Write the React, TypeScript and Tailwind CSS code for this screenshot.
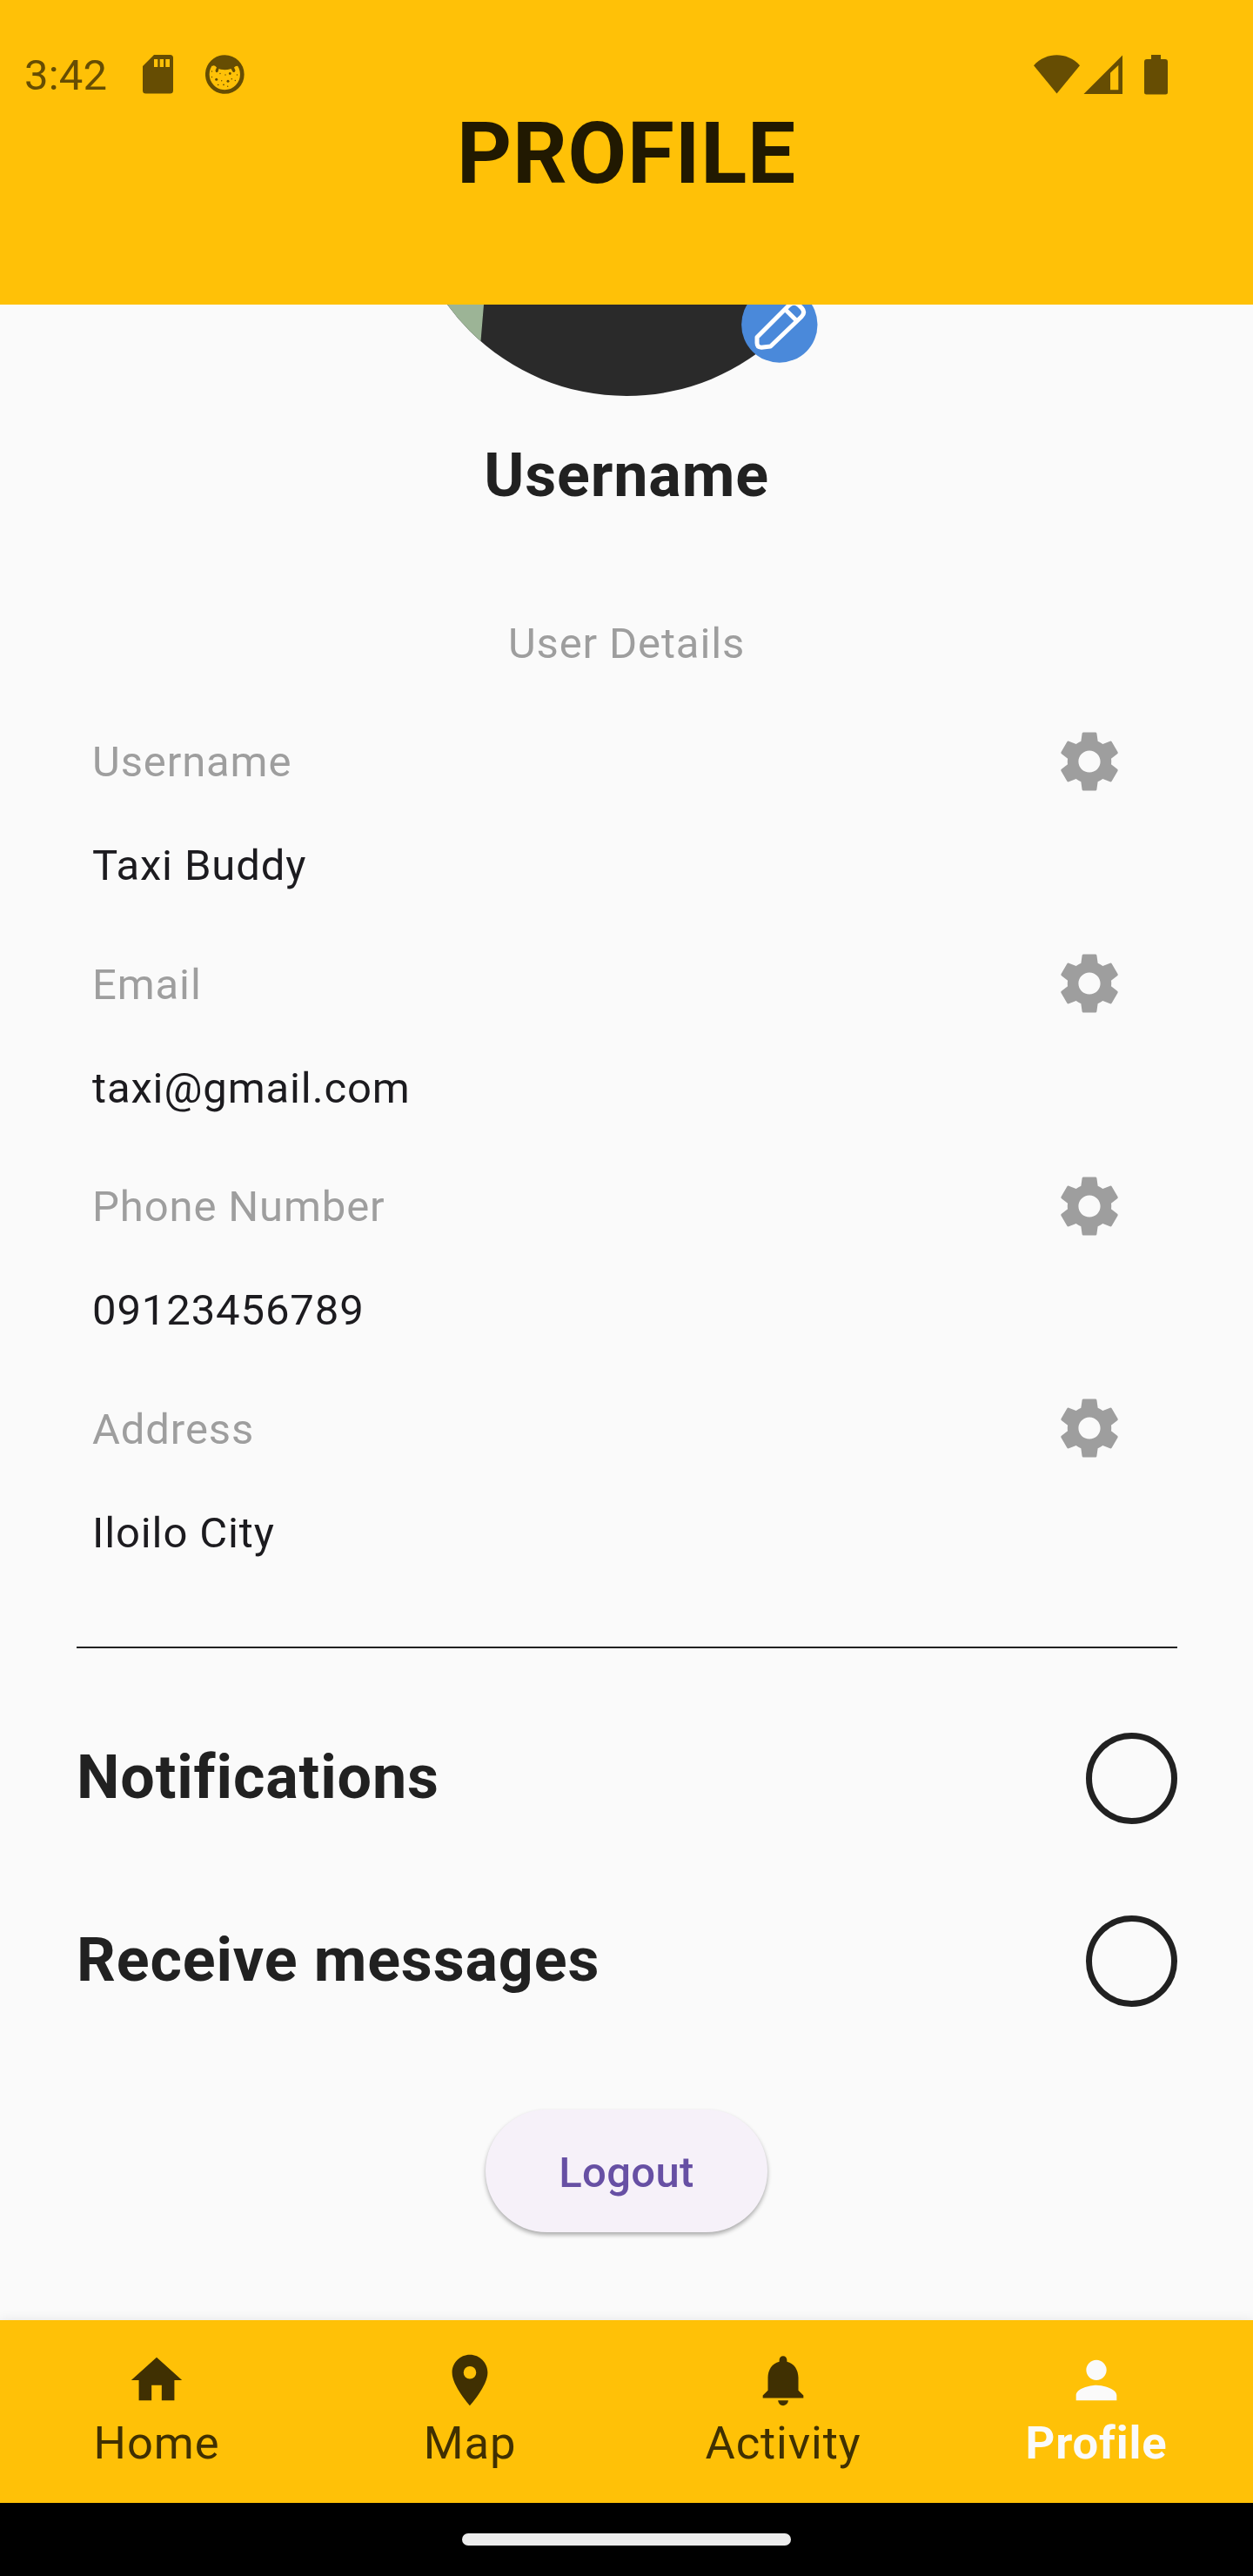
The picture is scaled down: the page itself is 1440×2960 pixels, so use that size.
import type { ReactNode } from "react";
import { MdHome, MdLocationOn, MdNotifications, MdPerson, MdSettings } from "react-icons/md";

const details = [
  { label: "Username", value: "Taxi Buddy" },
  { label: "Email", value: "taxi@gmail.com" },
  { label: "Phone Number", value: "09123456789" },
  { label: "Address", value: "Iloilo City" },
];

function StatusBar() {
  return (
    <div className="flex h-12 items-center text-[#664d03]">
      <span className="ml-[28px] w-[136px] text-[49px] leading-[48px] tracking-[0.2px]">3:42</span>
      <svg className="-mt-[3px] h-[45px] w-[35px]" viewBox="0 0 35 45" fill="currentColor">
        <path
          fillRule="evenodd"
          d="M13 0h18.500q3.500 0 3.500 3.500v37.500q0 3.500-3.500 3.500h-28q-3.500 0-3.500-3.500v-28zM13 5v9h4.300v-9zM19.700 5v9h4.300v-9zM26.300 5v9h4.700v-9z"
        />
      </svg>
      <svg className="-mt-[3px] ml-[37px] h-[45px] w-[45px]" viewBox="0 0 45 45" fill="currentColor">
        <circle cx="22.300" cy="22.500" r="20" fill="none" stroke="currentColor" strokeWidth="4.700" />
        <path d="M6 9Q22 -4 39 9L38 13Q35 12 33 14.500L34.500 18Q34 21 31.500 19.500L29.500 16Q22 18.500 15.500 16L14.500 19.500Q12 21.500 11.500 18L13 14.500Q10 11 8 13z" />
        <circle cx="12.700" cy="28.300" r="1.500" />
        <circle cx="28.300" cy="21.500" r="1.400" />
        <circle cx="26" cy="30.300" r="1.500" />
        <circle cx="17" cy="21.500" r=".7" />
        <circle cx="7.500" cy="19" r=".7" />
        <circle cx="7.500" cy="25.500" r=".7" />
        <circle cx="18.700" cy="29.700" r=".7" />
        <circle cx="23" cy="23" r=".7" />
        <circle cx="30.300" cy="27.700" r=".8" />
        <circle cx="34.300" cy="29.500" r=".7" />
        <circle cx="36.500" cy="23" r=".7" />
        <circle cx="14.700" cy="34.500" r=".8" />
        <circle cx="21" cy="34.300" r=".9" />
        <circle cx="25.700" cy="36.300" r=".7" />
      </svg>
      <div className="-mt-[3px] mr-[98px] ml-auto flex items-center">
        <svg className="h-[45px] w-[53px]" viewBox="0 0 53 45" fill="currentColor">
          <path d="M0 12.300C7.500 4 17 .3 26.500 .3S45.500 4 53 12.300L26.500 44.500z" />
        </svg>
        <svg className="ml-[4px] h-[45px] w-[45px]" viewBox="0 0 45 45" fill="currentColor">
          <path fillRule="evenodd" d="M45 .5v44.500h-44.500zM40.300 12l-9.300 8.800v19.400h9.300z" />
        </svg>
        <svg className="ml-[25px] h-[46px] w-[27px]" viewBox="0 0 27 46" fill="currentColor">
          <path d="M8 0h11v5h5q3 0 3 3v35q0 2.500-2.500 2.500h-22q-2.500 0-2.500-2.500v-35q0-3 3-3h5z" />
        </svg>
      </div>
    </div>
  );
}

function Avatar() {
  return (
    <div className="relative h-[106px] overflow-hidden">
      <div className="absolute bottom-[1px] left-1/2 size-[509px] -translate-x-1/2 overflow-hidden rounded-full bg-[#2a2a2a]">
        <svg className="absolute bottom-0 left-0 h-[105px] w-[120px]" viewBox="0 0 120 105" fill="#9cb496">
          <path d="M0 0H90.500L87 42V105H0z" />
        </svg>
      </div>
      <svg className="absolute -top-[21px] left-[852px] size-[88px]" viewBox="0 0 88 88">
        <circle cx="43.800" cy="44" r="43.700" fill="#4a89da" />
        <g fill="none" stroke="#fff" strokeWidth="5" strokeLinejoin="round">
          <path d="M18 58.500L54.500 22Q60.500 16 66.500 22L69.500 25Q74 30 69 35L33.500 69L23 70.200Q18 70 18 65z" />
          <path d="M50.300 26.500L62.500 38.500" />
        </g>
      </svg>
    </div>
  );
}

function DetailRow({ label, value }: { label: string; value: string }) {
  return (
    <div className="flex h-[255.500px] flex-col pr-[146px] pl-[106px] text-[49px] tracking-[0.875px]">
      <div className="flex h-[84px] items-center justify-between text-[#9e9e9e]">
        <span className="mt-px leading-[49px]">{label}</span>
        <MdSettings className="mb-[0.200px] size-[84px] shrink-0" />
      </div>
      <span className="mt-[53px] leading-[49px] text-[#1c1b1f]">{value}</span>
    </div>
  );
}

function ToggleRow({ label }: { label: string }) {
  return (
    <div className="flex h-[105px] items-center justify-between pr-[87px] pl-[88px]">
      <span className="mb-[3px] text-[70px] leading-[70px] font-bold tracking-[0.875px] text-[#212121]">{label}</span>
      <span className="size-[105px] rounded-full border-[7px] border-[#212121]" />
    </div>
  );
}

function NavItem({ icon, label, active }: { icon: ReactNode; label: string; active?: boolean }) {
  return (
    <div className={active ? "flex flex-1 flex-col items-center font-bold text-[#fafafa]" : "flex flex-1 flex-col items-center text-[#403002]"}>
      {icon}
      <span className="mt-[11px] text-[52.500px] leading-[53px] tracking-[0.875px]">{label}</span>
    </div>
  );
}

export default function App() {
  return (
    <div className="flex h-[2960px] w-[1440px] flex-col overflow-hidden bg-[#fafafa] font-['Roboto',sans-serif]">
      <header className="h-[350px] shrink-0 bg-[#ffc107] pt-[63px]">
        <StatusBar />
        <h1 className="mt-[17px] text-center text-[98px] leading-[98px] font-bold tracking-[0.875px] text-[#211901]">PROFILE</h1>
      </header>

      <main className="flex h-[2316px] shrink-0 flex-col">
        <Avatar />
        <h2 className="mt-[55px] text-center text-[70px] leading-[70px] font-bold tracking-[0.875px] text-[#212121]">Username</h2>
        <p className="mt-[134px] mb-[69px] text-center text-[49px] leading-[49px] tracking-[0.875px] text-[#9e9e9e]">User Details</p>
        {details.map((d) => (
          <DetailRow key={d.label} label={d.label} value={d.value} />
        ))}
        <div className="mt-[37px] mr-[87px] mb-[97px] ml-[88px] h-[2px] shrink-0 bg-[#212121]" />
        <div className="flex flex-col gap-[105px]">
          <ToggleRow label="Notifications" />
          <ToggleRow label="Receive messages" />
        </div>
        <button className="mt-[118px] h-[141px] w-[324px] self-center rounded-full bg-[#f6f1f9] pt-[3px] text-[49px] leading-[49px] font-medium tracking-[0.35px] text-[#6750a4] shadow-[0_3px_5px_rgba(0,0,0,0.32)]">
          Logout
        </button>
      </main>

      <nav className="flex h-[210px] shrink-0 bg-[#ffc107] pt-[34px] shadow-[0_0_12px_rgba(0,0,0,0.09)]">
        <NavItem icon={<MdHome className="size-[70px]" />} label="Home" />
        <NavItem icon={<MdLocationOn className="size-[70px]" />} label="Map" />
        <NavItem icon={<MdNotifications className="size-[70px]" />} label="Activity" />
        <NavItem icon={<MdPerson className="size-[70px]" />} label="Profile" active />
      </nav>

      <div className="flex h-[84px] shrink-0 justify-center bg-black pt-[35px]">
        <div className="h-[14px] w-[378px] rounded-[7px] bg-[#ececec]" />
      </div>
    </div>
  );
}
